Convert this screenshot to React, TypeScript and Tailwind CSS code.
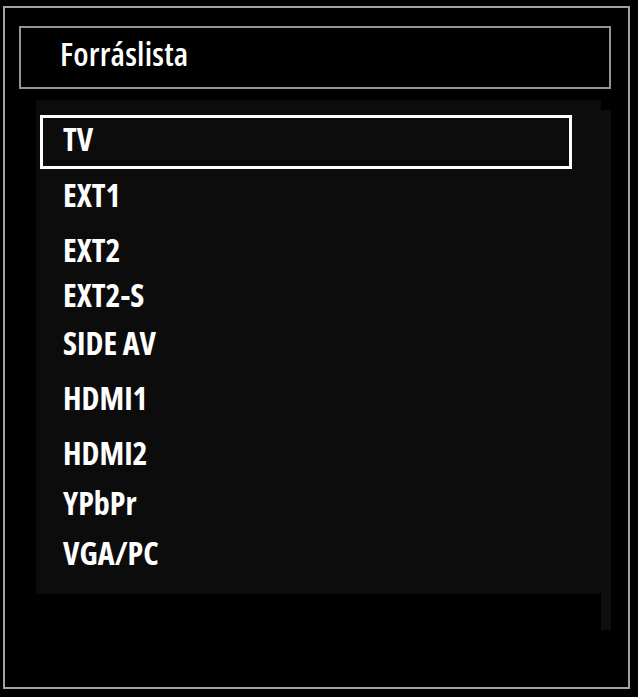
import React from 'react';

const sources = [
  { label: 'EXT1', row: 'h-[55px]' },
  { label: 'EXT2', row: 'h-[45px]' },
  { label: 'EXT2-S', row: 'h-[48px]' },
  { label: 'SIDE AV', row: 'h-[55px]' },
  { label: 'HDMI1', row: 'h-[55px]' },
  { label: 'HDMI2', row: 'h-[50px]' },
  { label: 'YPbPr', row: 'h-[50px]' },
  { label: 'VGA/PC', row: 'h-[32px]' },
];

const tvFont = "font-['Open_Sans',sans-serif] [font-stretch:condensed]";

export default function App() {
  return (
    <div className={`min-h-[697px] bg-black pl-[3px] pt-[6px] text-white ${tvFont}`}>
      <div className="w-[627px] h-[683px] border-2 border-[#a3a3a3] pt-[18px] pl-[14px]">
        {/* Title bar */}
        <div className="w-[592px] h-[63px] border-2 border-[#959595] pl-[39px] pt-[10px]">
          <h1 className="text-[33px] leading-[32px] tracking-[0.2px] font-semibold">Forráslista</h1>
        </div>

        {/* Source list */}
        <div className="flex items-start mt-[11px] ml-[17px]">
          <div className="w-[565px] h-[494px] bg-[#0c0c0c] pt-[15px] pl-[4px]">
            <div className="w-[532px] h-[54px] border-[3px] border-white pl-[20px] pt-[5px]">
              <span className="block text-[32px] leading-[32px] font-bold">TV</span>
            </div>
            <ul className="mt-[10px] pl-[23px]">
              {sources.map((s) => (
                <li key={s.label} className={`${s.row} text-[32px] leading-[32px] font-bold`}>
                  {s.label}
                </li>
              ))}
            </ul>
          </div>
          <div className="w-[10px] h-[520px] mt-[10px] bg-[#0e0e0e]" />
        </div>
      </div>
    </div>
  );
}
